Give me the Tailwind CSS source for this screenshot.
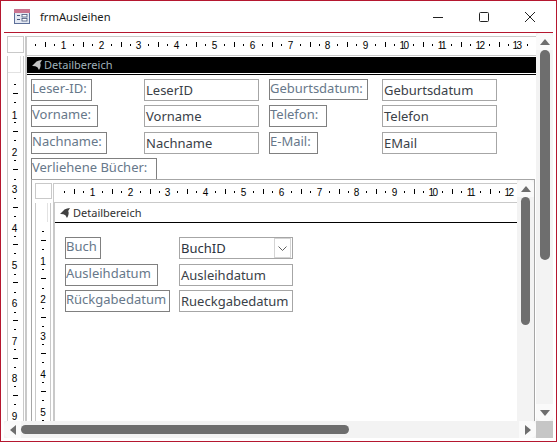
<!DOCTYPE html>
<html lang="de">
<head>
<meta charset="utf-8">
<title>frmAusleihen</title>
<script src="https://cdn.jsdelivr.net/npm/@tailwindcss/browser@4"></script>
</head>
<body class="bg-white overflow-hidden">
<div class="w-[557px] h-[442px] flex flex-col bg-white border border-[#b5172f] font-['Noto_Sans',sans-serif] text-[13px] leading-[19px] whitespace-nowrap text-[#3a4148]">
  <!-- title bar -->
  <div class="h-[31px] flex items-center shrink-0">
    <svg class="ml-[13px] mt-[-1px]" width="16" height="15" viewBox="0 0 16 15">
      <rect x="0.5" y="0.5" width="15" height="14" fill="#e4e9f3" stroke="#5d6f99"/>
      <rect x="0" y="0" width="16" height="4" fill="#c9748f"/>
      <rect x="3" y="6" width="3" height="1" fill="#47567a"/>
      <rect x="3" y="10" width="3" height="1" fill="#47567a"/>
      <rect x="8" y="5.5" width="5" height="2.5" fill="#fff" stroke="#47567a" stroke-width="0.8"/>
      <rect x="8" y="9.5" width="5" height="2.5" fill="#fff" stroke="#47567a" stroke-width="0.8"/>
    </svg>
    <span class="ml-[10px] text-[11.2px] text-[#1a1a1a]">frmAusleihen</span>
    <div class="ml-auto flex items-center mr-[21px] gap-[36px]">
      <svg width="10" height="10" viewBox="0 0 10 10"><path d="M0 5.5H10" stroke="#222" fill="none"/></svg>
      <svg width="10" height="10" viewBox="0 0 10 10"><rect x="0.5" y="0.5" width="9" height="9" rx="1" stroke="#222" fill="none"/></svg>
      <svg width="10" height="10" viewBox="0 0 10 10"><path d="M0 0L10 10M10 0L0 10" stroke="#222" fill="none"/></svg>
    </div>
  </div>
  <div class="h-px mx-[3px] bg-[#b5172f] shrink-0"></div>

  <!-- client area -->
  <div class="mx-[3px] h-[405px] grid grid-cols-[532px_17px] grid-rows-[388px_17px] shrink-0">
    <!-- designer -->
    <div class="flex flex-col overflow-hidden pt-[3px]">
      <!-- outer ruler row -->
      <div class="flex h-[20px] shrink-0 pl-[3px]">
        <div class="w-[17px] h-[17px] border border-[#c9c9c9] shrink-0"></div>
        <div class="ml-[1px] flex-1 border-l-2 border-t border-b border-[#c9c9c9] overflow-hidden">
          <svg width="509" height="18" class="ml-[-2px] mt-[-1px] font-['Liberation_Sans',sans-serif] text-[10px]">
            <path shape-rendering="crispEdges" stroke="#000" d="M10.5 8v2M29.5 8v2M48.5 8v2M67.5 8v2M86.5 8v2M105.5 8v2M123.5 8v2M142.5 8v2M161.5 8v2M180.5 8v2M199.5 8v2M218.5 8v2M237.5 8v2M256.5 8v2M275.5 8v2M294.5 8v2M312.5 8v2M331.5 8v2M350.5 8v2M369.5 8v2M388.5 8v2M407.5 8v2M426.5 8v2M445.5 8v2M464.5 8v2M483.5 8v2M502.5 8v2M20.5 6v5M58.5 6v5M96.5 6v5M133.5 6v5M171.5 6v5M209.5 6v5M247.5 6v5M285.5 6v5M322.5 6v5M360.5 6v5M398.5 6v5M436.5 6v5M474.5 6v5"/>
            <g text-anchor="middle" fill="#000">
              <text x="38.5" y="12.5">1</text><text x="76.5" y="12.5">2</text><text x="113.5" y="12.5">3</text><text x="151.5" y="12.5">4</text><text x="189.5" y="12.5">5</text><text x="227.5" y="12.5">6</text><text x="265.5" y="12.5">7</text><text x="302.5" y="12.5">8</text><text x="340.5" y="12.5">9</text><text x="378.5" y="12.5" letter-spacing="-1.5">10</text><text x="416.5" y="12.5" letter-spacing="-1.5">11</text><text x="454.5" y="12.5" letter-spacing="-1.5">12</text><text x="491.5" y="12.5" letter-spacing="-1.5">13</text>
            </g>
          </svg>
        </div>
      </div>
      <!-- outer body -->
      <div class="flex flex-1 min-h-0 pl-[3px]">
        <!-- outer vertical ruler -->
        <div class="w-[17px] shrink-0 border-x border-[#c9c9c9] relative overflow-hidden">
          <div class="h-[17px] w-[13px] border-r border-b border-[#e2e2e2]"></div>
          <svg width="15" height="366" class="font-['Liberation_Sans',sans-serif] text-[10px] mt-[-17px]">
            <path shape-rendering="crispEdges" stroke="#000" d="M6 28.5h2M6 46.5h2M6 66.5h2M6 84.5h2M6 104.5h2M6 123.5h2M6 142.5h2M6 160.5h2M6 180.5h2M6 197.5h2M6 218.5h2M6 236.5h2M6 256.5h2M6 273.5h2M6 293.5h2M6 311.5h2M6 330.5h2M6 348.5h2M6 368.5h2"/>
            <path shape-rendering="crispEdges" stroke="#000" d="M5 37.5h5M5 75.5h5M5 113.5h5M5 151.5h5M5 188.5h5M5 226.5h5M5 264.5h5M5 302.5h5M5 339.5h5"/>
            <g text-anchor="middle" fill="#000">
              <text x="6.5" y="63">1</text><text x="6.5" y="100">2</text><text x="6.5" y="137">3</text><text x="6.5" y="176">4</text><text x="6.5" y="213">5</text><text x="6.5" y="251">6</text><text x="6.5" y="289">7</text><text x="6.5" y="326">8</text><text x="6.5" y="364">9</text>
            </g>
          </svg>
        </div>
        <!-- form surface -->
        <div class="ml-[1px] flex-1 min-w-0 border-l-2 border-[#c9c9c9] flex flex-col">
          <div class="mt-[1px] h-[16px] shrink-0 bg-black flex items-center pl-[5px] gap-[2px] text-[11px] text-[#9fb0b8]">
            <svg width="10" height="10" viewBox="0 0 10 10"><path d="M0 6L4.5 1.5Q7 0 10 0L8.2 3Q9.6 5.5 7 10L5.4 7.2Q3.5 5.8 0 6Z" fill="#c4c4c4"/></svg>
            <span class="leading-[16px]">Detailbereich</span>
          </div>
          <div class="h-[1px] shrink-0"></div>
          <div class="h-[1px] bg-black shrink-0"></div>
          <!-- canvas -->
          <div class="relative flex-1 text-[#67788a]">
            <div class="absolute left-[4px] top-[4px] w-[61px] h-[22px] border border-[#808080] leading-[17px]">Leser-ID:</div>
            <div class="absolute left-[117px] top-[4px] w-[115px] h-[22px] border border-[#a6a6a6] pl-[1px] pt-[1px] text-[#3a4148]">LeserID</div>
            <div class="absolute left-[242px] top-[4px] w-[99px] h-[21px] border border-[#808080] leading-[17px]">Geburtsdatum:</div>
            <div class="absolute left-[355px] top-[4px] w-[115px] h-[22px] border border-[#a6a6a6] pl-[1px] pt-[1px] text-[#3a4148]">Geburtsdatum</div>

            <div class="absolute left-[4px] top-[30px] w-[67px] h-[22px] border border-[#808080] leading-[17px]">Vorname:</div>
            <div class="absolute left-[117px] top-[30px] w-[115px] h-[22px] border border-[#a6a6a6] pl-[1px] pt-[1px] text-[#3a4148]">Vorname</div>
            <div class="absolute left-[242px] top-[30px] w-[58px] h-[22px] border border-[#808080] leading-[17px]">Telefon:</div>
            <div class="absolute left-[355px] top-[30px] w-[115px] h-[22px] border border-[#a6a6a6] pl-[1px] pt-[1px] text-[#3a4148]">Telefon</div>

            <div class="absolute left-[4px] top-[57px] w-[76px] h-[22px] border border-[#808080] leading-[17px]">Nachname:</div>
            <div class="absolute left-[117px] top-[57px] w-[115px] h-[22px] border border-[#a6a6a6] pl-[1px] pt-[1px] text-[#3a4148]">Nachname</div>
            <div class="absolute left-[242px] top-[57px] w-[49px] h-[22px] border border-[#808080] leading-[17px]">E-Mail:</div>
            <div class="absolute left-[355px] top-[57px] w-[115px] h-[22px] border border-[#a6a6a6] pl-[1px] pt-[1px] text-[#3a4148]">EMail</div>

            <div class="absolute left-[4px] top-[83px] w-[126px] h-[22px] border border-[#808080] leading-[17px]">Verliehene Bücher:</div>

            <!-- subform -->
            <div class="absolute left-[4px] top-[104px] w-[504px] h-[242px] border-t border-x border-[#a6a6a6] flex bg-white">
              <div class="flex-1 min-w-0 flex flex-col pt-[3px] pl-[3px]">
                <div class="flex h-[20px] shrink-0">
                  <div class="w-[17px] h-[16px] border border-[#c9c9c9] shrink-0"></div>
                  <div class="ml-[1px] flex-1 border-l border-t border-b border-[#c9c9c9] overflow-hidden">
                    <svg width="465" height="18" class="mt-[-1px] font-['Liberation_Sans',sans-serif] text-[10px]">
                      <path shape-rendering="crispEdges" stroke="#000" d="M10.5 8v2M29.5 8v2M48.5 8v2M67.5 8v2M86.5 8v2M105.5 8v2M123.5 8v2M142.5 8v2M161.5 8v2M180.5 8v2M199.5 8v2M218.5 8v2M237.5 8v2M256.5 8v2M275.5 8v2M294.5 8v2M312.5 8v2M331.5 8v2M350.5 8v2M369.5 8v2M388.5 8v2M407.5 8v2M426.5 8v2M445.5 8v2M20.5 6v5M58.5 6v5M96.5 6v5M133.5 6v5M171.5 6v5M209.5 6v5M247.5 6v5M285.5 6v5M322.5 6v5M360.5 6v5M398.5 6v5M436.5 6v5"/>
                      <g text-anchor="middle" fill="#000">
                        <text x="38.5" y="12.5">1</text><text x="76.5" y="12.5">2</text><text x="113.5" y="12.5">3</text><text x="151.5" y="12.5">4</text><text x="189.5" y="12.5">5</text><text x="227.5" y="12.5">6</text><text x="265.5" y="12.5">7</text><text x="302.5" y="12.5">8</text><text x="340.5" y="12.5">9</text><text x="378.5" y="12.5" letter-spacing="-1.5">10</text><text x="416.5" y="12.5" letter-spacing="-1.5">11</text><text x="454.5" y="12.5" letter-spacing="-1.5">12</text>
                      </g>
                    </svg>
                  </div>
                </div>
                <div class="flex flex-1 min-h-0">
                  <div class="w-[16px] shrink-0 border-x border-[#c9c9c9] overflow-hidden">
                    <div class="h-[19px] w-[12px] border-r border-[#e2e2e2]"></div>
                    <svg width="14" height="220" class="font-['Liberation_Sans',sans-serif] text-[10px] mt-[-19px]">
                      <path shape-rendering="crispEdges" stroke="#000" d="M6 28.5h2M6 46.5h2M6 66.5h2M6 85.5h2M6 105.5h2M6 123.5h2M6 141.5h2M6 159.5h2M6 179.5h2M6 197.5h2M6 217.5h2"/>
                      <path shape-rendering="crispEdges" stroke="#000" d="M5 37.5h5M5 75.5h5M5 114.5h5M5 150.5h5M5 188.5h5"/>
                      <g text-anchor="middle" fill="#000">
                        <text x="7" y="62">1</text><text x="7" y="100">2</text><text x="7" y="137">3</text><text x="7" y="175">4</text><text x="7" y="213">5</text>
                      </g>
                    </svg>
                  </div>
                  <div class="ml-[2px] flex-1 min-w-0 border-l-2 border-[#c9c9c9] flex flex-col">
                    <div class="h-[19px] shrink-0 flex items-center pl-[5px] gap-[3px] text-[11px] text-[#303030]">
                      <svg width="10" height="10" viewBox="0 0 10 10"><path d="M0 6L4.5 1.5Q7 0 10 0L8.2 3Q9.6 5.5 7 10L5.4 7.2Q3.5 5.8 0 6Z" fill="#404040"/></svg>
                      <span class="leading-[16px]">Detailbereich</span>
                    </div>
                    <div class="h-[1px] bg-black shrink-0"></div>
                    <div class="relative flex-1">
                      <div class="absolute left-[10px] top-[14px] w-[36px] h-[22px] border border-[#808080] leading-[17px]">Buch</div>
                      <div class="absolute left-[124px] top-[14px] w-[114px] h-[22px] border border-[#a6a6a6] pl-[1px] pt-[1px] text-[#2c3440] flex">
                        <span>BuchID</span>
                        <span class="absolute right-[1px] top-[0px] w-[17px] h-[20px] border border-[#d4d4d4] flex items-center justify-center">
                          <svg width="9" height="5" viewBox="0 0 9 5"><path d="M0.5 0.5L4.5 4.5L8.5 0.5" stroke="#606060" fill="none"/></svg>
                        </span>
                      </div>
                      <div class="absolute left-[10px] top-[41px] w-[93px] h-[22px] border border-[#808080] leading-[17px]">Ausleihdatum</div>
                      <div class="absolute left-[124px] top-[41px] w-[114px] h-[22px] border border-[#a6a6a6] pl-[1px] pt-[1px] text-[#3a4148]">Ausleihdatum</div>
                      <div class="absolute left-[10px] top-[67px] w-[105px] h-[22px] border border-[#808080] leading-[17px]">Rückgabedatum</div>
                      <div class="absolute left-[124px] top-[67px] w-[114px] h-[22px] border border-[#a6a6a6] pl-[1px] pt-[1px] text-[#3a4148]">Rueckgabedatum</div>
                    </div>
                  </div>
                </div>
              </div>
              <!-- subform scrollbar -->
              <div class="w-[17px] shrink-0 bg-[#f3f3f3] flex flex-col items-center">
                <div class="h-[17px] w-[17px] rounded-t-[5px] bg-[#fafafa] flex items-center justify-center">
                  <svg width="10" height="6" viewBox="0 0 10 6"><path d="M5 0L10 6H0Z" fill="#6e6e6e"/></svg>
                </div>
                <div class="w-[9px] h-[128px] rounded-full bg-[#6e6e6e]"></div>
              </div>
            </div>
          </div>
        </div>
      </div>
    </div>
    <!-- outer vertical scrollbar -->
    <div class="bg-[#f3f3f3] flex flex-col items-center relative">
      <div class="h-[17px] w-[17px] rounded-t-[5px] bg-[#fafafa] flex items-center justify-center">
        <svg width="10" height="6" viewBox="0 0 10 6"><path d="M5 0L10 6H0Z" fill="#6e6e6e"/></svg>
      </div>
      <div class="w-[10px] h-[210px] rounded-full bg-[#6e6e6e]"></div>
      <div class="mt-auto h-[17px] w-[17px] rounded-b-[5px] bg-[#fafafa] flex items-center justify-center">
        <svg width="10" height="6" viewBox="0 0 10 6"><path d="M5 6L10 0H0Z" fill="#6e6e6e"/></svg>
      </div>
    </div>
    <!-- outer horizontal scrollbar -->
    <div class="bg-[#f3f3f3] flex items-center">
      <div class="w-[17px] h-[17px] rounded-l-[5px] bg-[#fafafa] flex items-center justify-center shrink-0">
        <svg width="6" height="10" viewBox="0 0 6 10"><path d="M0 5L6 0V10Z" fill="#6e6e6e"/></svg>
      </div>
      <div class="h-[9px] w-[328px] rounded-full bg-[#6e6e6e]"></div>
      <div class="ml-auto w-[17px] h-[17px] rounded-r-[5px] bg-[#fafafa] flex items-center justify-center shrink-0">
        <svg width="6" height="10" viewBox="0 0 6 10"><path d="M6 5L0 0V10Z" fill="#6e6e6e"/></svg>
      </div>
    </div>
    <div class="bg-[#c6c6c6]"></div>
  </div>
</div>
</body>
</html>
